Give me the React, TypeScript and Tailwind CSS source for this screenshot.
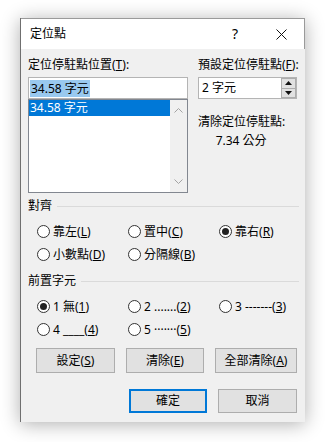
import type { ReactNode } from "react";

const leftAlign = [
  { label: "靠左", key: "L", checked: false },
  { label: "置中", key: "C", checked: false },
  { label: "靠右", key: "R", checked: true },
];
const leftAlign2 = [
  { label: "小數點", key: "D", checked: false },
  { label: "分隔線", key: "B", checked: false },
];
const leaders1 = [
  { label: "1 無", key: "1", checked: true },
  { label: "2 .......", key: "2", checked: false },
  { label: "3 -------", key: "3", checked: false },
];
const leaders2 = [
  { label: "4 ____", key: "4", checked: false },
  { label: "5 ·······", key: "5", checked: false },
];

function Radio({ label, k, checked }: { label: string; k: string; checked: boolean }) {
  return (
    <div className="flex items-center gap-[3px] w-[91px] shrink-0">
      <span className="w-[13px] h-[13px] rounded-full border border-[#333] bg-white flex items-center justify-center shrink-0">
        {checked && <span className="w-[7px] h-[7px] rounded-full bg-[#222]" />}
      </span>
      <span className="whitespace-nowrap">
        {label}(<u>{k}</u>)
      </span>
    </div>
  );
}

function Group({ title, children }: { title: string; children: ReactNode }) {
  return (
    <div className="flex items-center gap-[5px] h-[16px] pr-[6px]">
      <span>{title}</span>
      <span className="flex-1 h-px bg-[#dadada]" />
      {children}
    </div>
  );
}

function Btn({ children, w, primary }: { children: ReactNode; w: string; primary?: boolean }) {
  return (
    <div
      className={
        primary
          ? "h-full flex items-center justify-center bg-[#e1e1e1] border-2 border-[#0078d7] " + w
          : "h-full flex items-center justify-center bg-[#e1e1e1] border border-[#adadad] " + w
      }
    >
      {children}
    </div>
  );
}

export default function App() {
  return (
    <div className="relative w-[325px] h-[442px] bg-white overflow-hidden pl-[20px] pt-[18px] font-['Segoe_UI','Noto_Sans','Noto_Sans_CJK_TC',sans-serif] text-[12px] leading-[16px] text-black">
      {/* document text behind the dialog */}
      <span className="absolute left-[-5px] top-[134px] text-[14px]">)</span>

      <div className="relative w-[285px] h-[404px] flex flex-col border-l border-l-[#6f6f6f] shadow-[0_2px_18px_rgba(0,0,0,0.32)]">
        {/* Title bar */}
        <div className="h-[31px] bg-white border-t border-r border-[#9a9a9a] flex items-center shrink-0">
          <span className="pl-[9px] flex-1">定位點</span>
          <div className="w-[46px] h-full flex items-center justify-center text-[14px]">?</div>
          <div className="w-[46px] h-full flex items-center justify-center">
            <svg width="11" height="11" viewBox="0 0 11 11">
              <path d="M0.5 0.5 L10.5 10.5 M10.5 0.5 L0.5 10.5" stroke="#111" strokeWidth="1" />
            </svg>
          </div>
        </div>

        {/* Body */}
        <div className="flex-1 bg-[#f0f0f0] pl-[7px] pt-[8px] flex flex-col">
          <div className="flex gap-[10px]">
            {/* Left column */}
            <div className="w-[160px] flex flex-col">
              <span>
                定位停駐點位置(<u>T</u>):
              </span>
              <div className="mt-[4px] h-[22px] bg-white border border-[#b4b4b4] flex items-center pl-[1px]">
                <span className="bg-[#99c9ef] px-[1px] leading-[17px]">34.58 字元</span>
              </div>
              <div className="h-[94px] bg-white border border-[#828790] flex">
                <div className="flex-1 pt-[0px]">
                  <div className="h-[16px] bg-[#0078d7] text-white pl-[1px] flex items-center">34.58 字元</div>
                </div>
                <div className="w-[17px] bg-[#f0f0f0] flex flex-col items-center justify-between py-[8px]">
                  <svg width="9" height="5" viewBox="0 0 9 5">
                    <path d="M0.5 4.5 L4.5 0.5 L8.5 4.5" fill="none" stroke="#a3a3a3" strokeWidth="1" />
                  </svg>
                  <svg width="9" height="5" viewBox="0 0 9 5">
                    <path d="M0.5 0.5 L4.5 4.5 L8.5 0.5" fill="none" stroke="#a3a3a3" strokeWidth="1" />
                  </svg>
                </div>
              </div>
            </div>

            {/* Right column */}
            <div className="w-[99px] flex flex-col">
              <span className="whitespace-nowrap">
                預設定位停駐點(<u>F</u>):
              </span>
              <div className="mt-[4px] h-[22px] bg-white border border-[#b4b4b4] flex">
                <span className="flex-1 pl-[3px] flex items-center">2 字元</span>
                <div className="w-[15px] flex flex-col">
                  <div className="flex-1 bg-[#e1e1e1] border border-[#adadad] flex items-center justify-center">
                    <svg width="7" height="4" viewBox="0 0 7 4">
                      <path d="M0 4 L3.5 0 L7 4 Z" fill="#111" />
                    </svg>
                  </div>
                  <div className="flex-1 bg-[#e1e1e1] border border-t-0 border-[#adadad] flex items-center justify-center">
                    <svg width="7" height="4" viewBox="0 0 7 4">
                      <path d="M0 0 L3.5 4 L7 0 Z" fill="#111" />
                    </svg>
                  </div>
                </div>
              </div>
              <div className="mt-[15px] inline-flex flex-col items-center self-start">
                <span className="whitespace-nowrap">清除定位停駐點:</span>
                <span className="mt-[3px] pr-[1px]">7.34 公分</span>
              </div>
            </div>
          </div>

          {/* Alignment */}
          <div className="mt-[5px]">
            <Group title="對齊">{null}</Group>
          </div>
          <div className="mt-[6px] pl-[9px]">
            <div className="h-[23px] flex items-center">
              {leftAlign.map((r) => (
                <Radio key={r.key} label={r.label} k={r.key} checked={r.checked} />
              ))}
            </div>
            <div className="h-[23px] flex items-center">
              {leftAlign2.map((r) => (
                <Radio key={r.key} label={r.label} k={r.key} checked={r.checked} />
              ))}
            </div>
          </div>

          {/* Leader */}
          <div className="mt-[7px]">
            <Group title="前置字元">{null}</Group>
          </div>
          <div className="mt-[6px] pl-[9px]">
            <div className="h-[23px] flex items-center">
              {leaders1.map((r) => (
                <Radio key={r.key} label={r.label} k={r.key} checked={r.checked} />
              ))}
            </div>
            <div className="h-[23px] flex items-center">
              {leaders2.map((r) => (
                <Radio key={r.key} label={r.label} k={r.key} checked={r.checked} />
              ))}
            </div>
          </div>

          {/* Set / clear buttons */}
          <div className="mt-[7px] h-[25px] pl-[8px] flex gap-[11px]">
            <Btn w="w-[79px]">
              設定(<u>S</u>)
            </Btn>
            <Btn w="w-[78px]">
              清除(<u>E</u>)
            </Btn>
            <Btn w="w-[82px]">
              全部清除(<u>A</u>)
            </Btn>
          </div>

          {/* OK / Cancel */}
          <div className="mt-[16px] h-[24px] pl-[101px] flex gap-[11px]">
            <Btn w="w-[78px]" primary>
              確定
            </Btn>
            <Btn w="w-[79px]">取消</Btn>
          </div>
        </div>
      </div>
    </div>
  );
}
